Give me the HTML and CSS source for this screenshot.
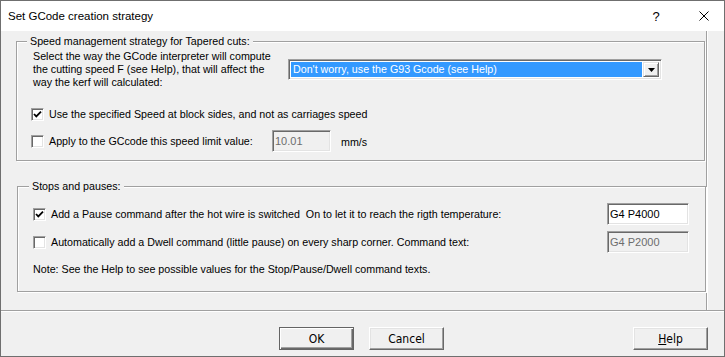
FILE: index.html
```html
<!DOCTYPE html>
<html lang="en">
<head>
  <meta charset="UTF-8">
  <title>Set GCode creation strategy</title>
  <link rel="stylesheet" href="styles.css">
</head>
<body>

  <div class="window">
    <div class="titlebar">
      <span class="title">Set GCode creation strategy</span>
      <span class="caption-btn help-btn">?</span>
      <span class="caption-btn close-btn">
        <svg width="10" height="10" viewBox="0 0 10 10"><path d="M0.5 0.5 L9.5 9.5 M9.5 0.5 L0.5 9.5" stroke="#000" stroke-width="1" fill="none"/></svg>
      </span>
    </div>

    <div class="content">
      <div class="group group-speed">
        <span class="legend">Speed management strategy for Tapered cuts:</span>

        <div class="row strategy-row">
          <p class="desc">Select the way the GCode interpreter will compute<br>the cutting speed F (see Help), that will affect the<br>way the kerf will calculated:</p>
          <div class="combo">
            <span class="combo-value">Don't worry, use the G93 Gcode (see Help)</span>
            <span class="combo-btn">
              <svg width="7" height="4" viewBox="0 0 7 4"><path d="M0 0 H7 L3.5 4 Z" fill="#000"/></svg>
            </span>
          </div>
        </div>

        <div class="row check-row side-row">
          <span class="checkbox checked">
            <svg width="9" height="9" viewBox="0 0 9 9"><path d="M1 4 L3.3 6.4 L8 1.6" stroke="#000" stroke-width="1.8" fill="none"/></svg>
          </span>
          <span class="check-label">Use the specified Speed at block sides, and not as carriages speed</span>
        </div>

        <div class="row check-row limit-row">
          <span class="checkbox"></span>
          <span class="check-label limit-label">Apply to the GCcode this speed limit value:</span>
          <input class="field limit-field" type="text" value="10.01" disabled>
          <span class="unit">mm/s</span>
        </div>
      </div>

      <div class="group group-stops">
        <span class="legend">Stops and pauses:</span>

        <div class="row check-row pause-row">
          <span class="checkbox checked">
            <svg width="9" height="9" viewBox="0 0 9 9"><path d="M1 4 L3.3 6.4 L8 1.6" stroke="#000" stroke-width="1.8" fill="none"/></svg>
          </span>
          <span class="check-label">Add a Pause command after the hot wire is switched &nbsp;On to let it to reach the rigth temperature:</span>
          <input class="field cmd-field" type="text" value="G4 P4000">
        </div>

        <div class="row check-row dwell-row">
          <span class="checkbox"></span>
          <span class="check-label">Automatically add a Dwell command (little pause) on every sharp corner. Command text:</span>
          <input class="field cmd-field" type="text" value="G4 P2000" disabled>
        </div>

        <p class="note">Note: See the Help to see possible values for the Stop/Pause/Dwell command texts.</p>
      </div>
    </div>

    <div class="separator"></div>

    <div class="buttons">
      <button class="btn btn-default">OK</button>
      <button class="btn">Cancel</button>
      <button class="btn btn-help"><u>H</u>elp</button>
    </div>
  </div>

</body>
</html>
```

FILE: styles.css
```css
body {
  margin: 0;
  font-family: "Liberation Sans", Arial, sans-serif;
  font-size: 10.7px;
  color: #000;
}

.window {
  width: 725px;
  height: 357px;
  box-sizing: border-box;
  border: 1px solid #6f6f6f;
  background: #f0f0f0;
  display: flex;
  flex-direction: column;
}

/* title bar */

.titlebar {
  height: 30px;
  flex: none;
  background: #fff;
  display: flex;
  align-items: center;
  padding-left: 7px;
  font-size: 11.5px;
}

.title {
  flex: 1;
}

.caption-btn {
  width: 40px;
  height: 30px;
  display: flex;
  align-items: center;
  justify-content: center;
}

.help-btn {
  margin-right: 8px;
  font-size: 13px;
}

/* content panel */

.content {
  flex: 1;
  margin-right: 17px;
  padding: 10px 1px 0 15px;
  border-right: 1px solid #a0a0a0;
  box-shadow: 1px 0 0 #fff;
}

.group {
  position: relative;
  border: 1px solid #a0a0a0;
  box-shadow: inset 1px 1px 0 #fff, 1px 1px 0 #fff;
}

.legend {
  position: absolute;
  top: -7px;
  left: 10px;
  padding: 0 3px;
  line-height: 13px;
  background: #f0f0f0;
}

.group-speed {
  padding: 8px 16px 8px 14px;
}

.group-stops {
  margin: 25px -1px 0 1px;
  padding: 16px 16px 15px 15px;
}

.group-stops .legend {
  left: 11px;
}

.row {
  display: flex;
  align-items: center;
}

.strategy-row {
  height: 39px;
}

.desc {
  margin: 0 0 0 2px;
  width: 255px;
  line-height: 13px;
  flex: none;
}

.combo {
  width: 374px;
  height: 21px;
  box-sizing: border-box;
  border: 1px solid;
  border-color: #a0a0a0 #fff #fff #a0a0a0;
  box-shadow: inset 1px 1px 0 #696969, inset -1px -1px 0 #e3e3e3;
  background: #fff;
  padding: 2px;
  display: flex;
}

.combo-value {
  flex: 1;
  background: #3399ff;
  color: #fff;
  padding-left: 2px;
  line-height: 15px;
  margin-right: 1px;
}

.combo-btn {
  width: 16px;
  box-sizing: border-box;
  border: 1px solid;
  border-color: #e3e3e3 #696969 #696969 #e3e3e3;
  box-shadow: inset 1px 1px 0 #fff, inset -1px -1px 0 #a0a0a0;
  background: #f0f0f0;
  display: flex;
  align-items: center;
  justify-content: center;
}

.check-row {
  line-height: 13px;
}

.checkbox {
  width: 13px;
  height: 13px;
  box-sizing: border-box;
  flex: none;
  border: 1px solid;
  border-color: #a0a0a0 #fff #fff #a0a0a0;
  box-shadow: inset 1px 1px 0 #696969, inset -1px -1px 0 #e3e3e3;
  background: #fff;
  display: flex;
  align-items: center;
  justify-content: center;
  margin-right: 5px;
}

.side-row {
  margin-top: 19px;
}

.limit-row {
  margin-top: 9px;
  height: 22px;
}

.limit-label {
  width: 223px;
}

.field {
  box-sizing: border-box;
  height: 22px;
  margin: 0;
  border: 1px solid;
  border-color: #a0a0a0 #fff #fff #a0a0a0;
  box-shadow: inset 1px 1px 0 #696969, inset -1px -1px 0 #e3e3e3;
  background: #fff;
  padding: 0 0 0 2px;
  font-family: inherit;
  font-size: 11px;
  color: #000;
  outline: none;
}

.field:disabled {
  background: #f0f0f0;
  color: #6d6d6d;
}

.limit-field {
  width: 59px;
}

.unit {
  margin-left: 10px;
  padding-top: 3px;
}

.cmd-field {
  width: 82px;
  margin-left: auto;
}

.pause-row {
  height: 22px;
}

.dwell-row {
  height: 22px;
  margin-top: 6px;
}

.note {
  margin: 10px 0 0 0;
  line-height: 13px;
}

/* bottom */

.separator {
  flex: none;
  height: 1px;
  background: #a0a0a0;
  border-bottom: 1px solid #fff;
}

.buttons {
  flex: none;
  display: flex;
  padding: 15px 16px 6px 278px;
}

.btn {
  width: 75px;
  height: 23px;
  box-sizing: border-box;
  margin: 0 15px 0 0;
  padding: 0;
  border: 1px solid;
  border-color: #fff #696969 #696969 #fff;
  box-shadow: inset -1px -1px 0 #a0a0a0, inset 1px 1px 0 #e3e3e3;
  background: #f0f0f0;
  font-family: "Liberation Sans Narrow", "DejaVu Sans Condensed", sans-serif;
  font-size: 12px;
  color: #000;
}

.btn-default {
  border-color: #646464;
  box-shadow: inset 1px 1px 0 #fff, inset -1px -1px 0 #696969, inset -2px -2px 0 #a0a0a0;
}

.btn-help {
  margin: 0 0 0 auto;
}
```
